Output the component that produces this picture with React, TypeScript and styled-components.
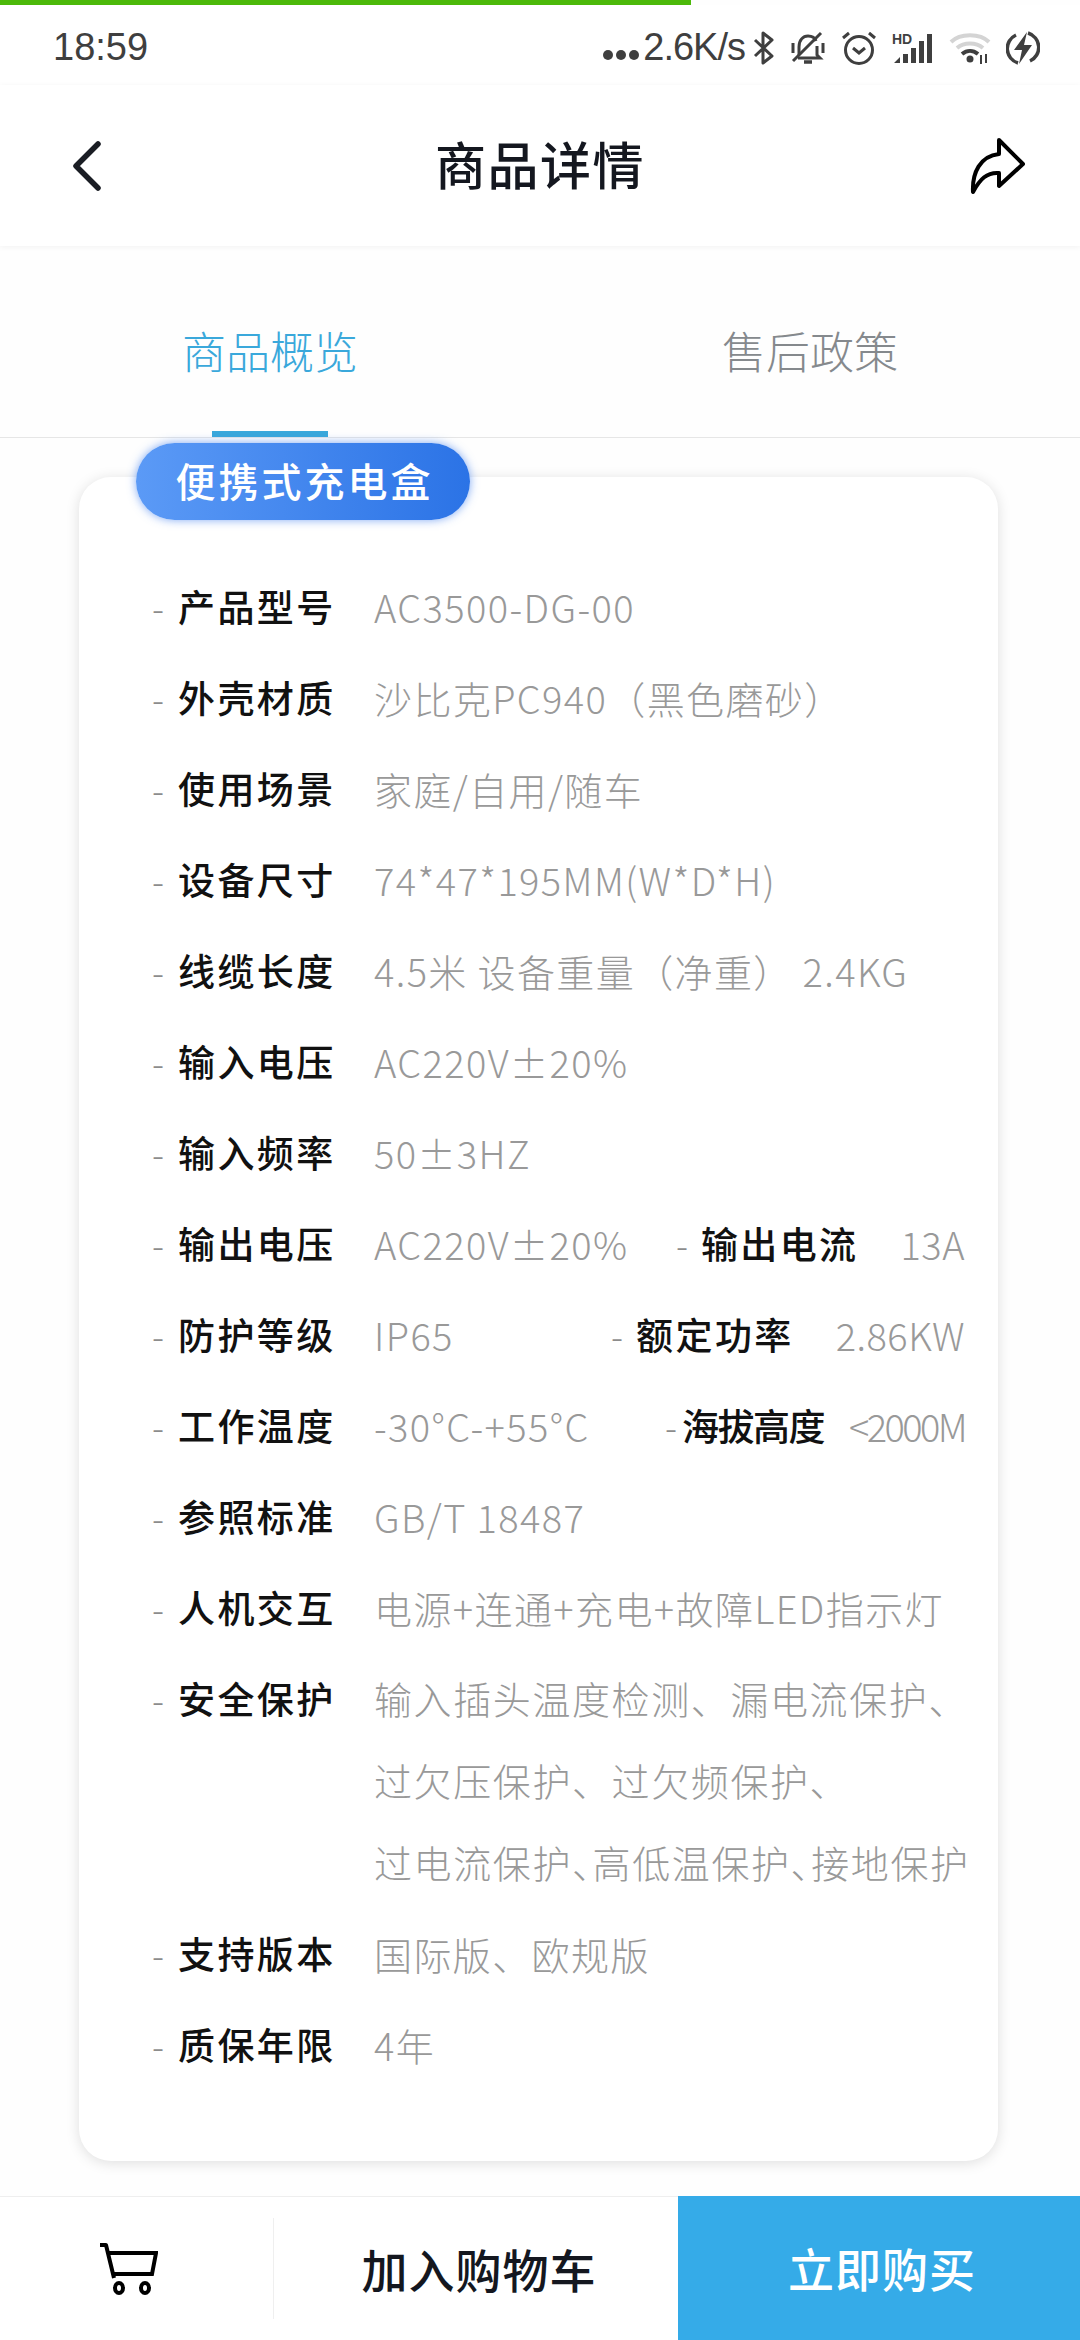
import React from 'react';
import styled, { createGlobalStyle } from 'styled-components';

const GlobalStyle = createGlobalStyle`
    html, body {
        margin: 0;
        padding: 0;
        background: #fff;
    }
    body {
        font-family: "Noto Sans CJK SC", "Noto Sans", sans-serif;
    }
`;

const Page = styled.div`
    width: 1080px;
    height: 2340px;
    display: flex;
    flex-direction: column;
    background: #fefefe;
    overflow: hidden;
`;

const Progress = styled.div`
    width: 691px;
    height: 5px;
    flex: none;
    background: #4cb90a;
`;

const StatusBar = styled.div`
    height: 85px;
    flex: none;
    display: flex;
    align-items: center;
    justify-content: space-between;
    padding: 0 40px 0 53px;
    background: #fff;
    color: #3f3f3f;
    font-family: "Liberation Sans", Arial, sans-serif;
    font-size: 38px;
    box-sizing: border-box;
    margin-bottom: -5px;
`;

const StatusRight = styled.div`
    display: flex;
    align-items: center;
    gap: 15px;
`;

const Speed = styled.span`
    display: flex;
    align-items: center;
    gap: 4px;
    margin-right: -7px;
    letter-spacing: -1px;
`;

const Dots = styled.svg`
    width: 36px;
    height: 12px;
    margin-top: 14px;
`;

const Header = styled.header`
    height: 161px;
    flex: none;
    display: grid;
    grid-template-columns: 1fr auto 1fr;
    align-items: center;
    padding: 0 54px;
    background: #fff;
    box-sizing: border-box;
    box-shadow: 0 1px 6px rgba(0, 0, 0, 0.05);
    position: relative;
    svg:first-child {
        margin-left: 17px;
    }
    svg:last-child {
        justify-self: end;
    }
`;

const Title = styled.h1`
    margin: 0;
    padding-bottom: 6px;
    font-size: 51px;
    font-weight: 500;
    color: #14171f;
    letter-spacing: 1.5px;
`;

const Tabs = styled.nav`
    height: 191px;
    flex: none;
    display: flex;
    border-bottom: 1px solid #e6e6e6;
    box-sizing: content-box;
`;

const Tab = styled.div<{ $active?: boolean }>`
    flex: 1;
    display: flex;
    align-items: center;
    justify-content: center;
    padding-top: 16px;
    position: relative;
    font-size: 44px;
    font-weight: 300;
    color: ${({ $active }) => ($active ? '#3aa8db' : '#85898d')};
    ${({ $active }) =>
        $active &&
        `
        &::after {
            content: '';
            position: absolute;
            left: 212px;
            bottom: 0;
            width: 116px;
            height: 6px;
            background: #3aa8db;
        }
    `}
`;

const Content = styled.main`
    flex: 1;
    padding: 39px 82px 0 79px;
`;

const Card = styled.section`
    position: relative;
    height: 1684px;
    box-sizing: border-box;
    padding: 84px 33px 0 73px;
    background: #fff;
    border-radius: 32px;
    box-shadow: 0 2px 14px rgba(0, 0, 0, 0.13);
`;

const Badge = styled.div`
    position: absolute;
    top: -34px;
    left: 57px;
    width: 334px;
    height: 77px;
    padding: 0 0 3px 3px;
    box-sizing: border-box;
    display: flex;
    align-items: center;
    justify-content: center;
    border-radius: 39px;
    background: linear-gradient(90deg, #5b9af6, #2b73e6);
    box-shadow: 0 0 10px rgba(72, 132, 240, 0.7);
    color: #fff;
    font-size: 40px;
    font-weight: 500;
    letter-spacing: 3px;
`;

const Row = styled.div<{ $multi?: boolean }>`
    display: flex;
    align-items: flex-start;
    min-height: 91px;
    line-height: 91px;
    font-size: 38px;
    ${({ $multi }) => $multi && 'margin-bottom: 5px;'}
`;

const Dash = styled.span`
    width: 26px;
    flex: none;
    color: #8c8c8c;
    font-size: 36px;
    font-weight: 300;
`;

const Label = styled.span`
    flex: none;
    width: 196px;
    color: #111;
    font-size: 37px;
    font-weight: 500;
    letter-spacing: 2.4px;
`;

const Value = styled.span`
    color: #999;
    font-weight: 300;
    letter-spacing: 1.4px;
    white-space: nowrap;
`;

const ValueLines = styled.div`
    display: flex;
    flex-direction: column;
    color: #999;
    font-weight: 300;
    line-height: 82px;
    white-space: nowrap;
    padding-top: 4px;
`;

const ValueLine = styled.span<{ $halfPunct?: boolean }>`
    letter-spacing: 1.6px;
    ${({ $halfPunct }) => $halfPunct && 'font-feature-settings: "halt";'}
`;

const Pair = styled.div<{ $gap: number; $tight?: boolean }>`
    margin-left: auto;
    display: flex;
    ${Dash} {
        width: ${({ $tight }) => ($tight ? '17px' : '25px')};
    }
    ${Label} {
        width: auto;
        margin-right: ${({ $gap }) => $gap}px;
        letter-spacing: ${({ $tight }) => ($tight ? '-1.5px' : '2.4px')};
    }
    ${Value} {
        letter-spacing: ${({ $tight }) => ($tight ? '-2.6px' : '0.5px')};
    }
`;

const BottomBar = styled.footer`
    height: 144px;
    flex: none;
    display: flex;
    background: #fff;
    border-top: 1px solid #eee;
    box-sizing: border-box;
`;

const CartCell = styled.div`
    width: 274px;
    flex: none;
    display: flex;
    align-items: center;
    justify-content: center;
    padding-right: 16px;
    box-sizing: border-box;
    position: relative;
    &::after {
        content: '';
        position: absolute;
        right: 0;
        top: 21px;
        bottom: 21px;
        width: 1px;
        background: #efefef;
    }
`;

const Action = styled.button<{ $primary?: boolean }>`
    flex: 1;
    border: 0;
    padding: 0 0 2px 6px;
    margin: ${({ $primary }) => ($primary ? '-1px 0 0' : '0')};
    font-family: inherit;
    font-size: 46px;
    font-weight: 500;
    letter-spacing: 1px;
    color: ${({ $primary }) => ($primary ? '#fff' : '#14171f')};
    background: ${({ $primary }) => ($primary ? '#35abe8' : '#fff')};
`;

const AddButton = styled(Action)`
    flex: none;
    width: 404px;
`;

const BackIcon = () => (
    <svg width="32" height="50" viewBox="0 0 32 50" fill="none">
        <path d="M27 3 5 25l22 22" stroke="#1a1d24" strokeWidth="5.5" strokeLinecap="round" strokeLinejoin="round" />
    </svg>
);

const ShareIcon = () => (
    <svg width="58" height="58" viewBox="0 0 58 58" fill="none">
        <path
            d="M31 3 55 27 31 49V36C19 35 12 42 5 55 4 36 12 19 31 17Z"
            stroke="#000"
            strokeWidth="4"
            strokeLinejoin="round"
        />
    </svg>
);

const CartIcon = () => (
    <svg width="58" height="54" viewBox="0 0 58 54" fill="none" stroke="#000" strokeWidth="4">
        <path d="M0 3h6l8 33" strokeLinejoin="round" />
        <path d="M8 11h48l-4 21H13" />
        <ellipse cx="19" cy="46" rx="4" ry="5" />
        <ellipse cx="45" cy="46" rx="4" ry="5" />
    </svg>
);

const StatusIcons = () => (
    <>
        <svg width="22" height="34" viewBox="0 0 22 34" fill="none" stroke="#3f3f3f" strokeWidth="3">
            <path d="M2 9 19 25 10 32V2l9 7L2 25" strokeLinejoin="round" />
        </svg>
        <svg width="36" height="34" viewBox="0 0 36 34" fill="none" stroke="#3f3f3f" strokeWidth="3">
            <path d="M9 24V16C9 9 13 5 18 5c4 0 7 2 8 5M27 15v9l3 3H8" />
            <path d="M3 30 31 2" />
            <path d="M14 31h8" strokeWidth="3.5" />
            <path d="M3 12v10M33 12v10" />
        </svg>
        <svg width="36" height="34" viewBox="0 0 36 34" fill="none" stroke="#3f3f3f" strokeWidth="3">
            <circle cx="18" cy="19" r="13.5" />
            <path d="M12 17l6 5 6-5M2 7l6-5M34 7l-6-5" />
        </svg>
        <svg width="42" height="32" viewBox="0 0 42 32">
            <text x="0" y="12" fontFamily="Liberation Sans" fontWeight="700" fontSize="14" fill="#3f3f3f">
                HD
            </text>
            <path
                d="M2 31 8 25v6ZM11 22h5v9h-5ZM19 16h5v15h-5ZM27 9h5v22h-5ZM35 2h5v29h-5Z"
                fill="#3f3f3f"
            />
        </svg>
        <svg width="42" height="34" viewBox="0 0 42 34" fill="none">
            <path d="M2 11C11 2 31 2 40 11M8 17c7-6 19-6 26 0" stroke="#d4d4d4" strokeWidth="4" />
            <path d="M13 23c5-4 11-4 16 0" stroke="#3f3f3f" strokeWidth="4" />
            <circle cx="21" cy="28" r="3.5" fill="#3f3f3f" />
            <path d="M32 24v9M37 23v9" stroke="#3f3f3f" strokeWidth="2" />
        </svg>
        <svg width="34" height="34" viewBox="0 0 34 34" fill="none">
            <path d="M10 4a15 15 0 0 0 2 28M24 30a15 15 0 0 0-2-28" stroke="#3f3f3f" strokeWidth="3.5" />
            <path d="M21 1 8 19h8l-3 14 13-19h-8Z" fill="#3f3f3f" />
        </svg>
    </>
);

type Spec = {
    label: string;
    value?: string;
    lines?: { text: string; halfPunct?: boolean }[];
    extra?: { label: string; value: string; gap: number; tight?: boolean };
};

const specs: Spec[] = [
    { label: '产品型号', value: 'AC3500-DG-00' },
    { label: '外壳材质', value: '沙比克PC940（黑色磨砂）' },
    { label: '使用场景', value: '家庭/自用/随车' },
    { label: '设备尺寸', value: '74*47*195MM(W*D*H)' },
    { label: '线缆长度', value: '4.5米 设备重量（净重） 2.4KG' },
    { label: '输入电压', value: 'AC220V±20%' },
    { label: '输入频率', value: '50±3HZ' },
    { label: '输出电压', value: 'AC220V±20%', extra: { label: '输出电流', value: '13A', gap: 42 } },
    { label: '防护等级', value: 'IP65', extra: { label: '额定功率', value: '2.86KW', gap: 42 } },
    { label: '工作温度', value: '-30°C-+55°C', extra: { label: '海拔高度', value: '<2000M', gap: 25, tight: true } },
    { label: '参照标准', value: 'GB/T 18487' },
    { label: '人机交互', value: '电源+连通+充电+故障LED指示灯' },
    {
        label: '安全保护',
        lines: [
            { text: '输入插头温度检测、漏电流保护、' },
            { text: '过欠压保护、过欠频保护、' },
            { text: '过电流保护、高低温保护、接地保护', halfPunct: true },
        ],
    },
    { label: '支持版本', value: '国际版、欧规版' },
    { label: '质保年限', value: '4年' },
];

export default function App() {
    return (
        <Page>
            <GlobalStyle />
            <Progress />
            <StatusBar>
                <span>18:59</span>
                <StatusRight>
                    <Speed>
                        <Dots viewBox="0 0 36 12" fill="#3f3f3f">
                            <circle cx="5" cy="6" r="5" />
                            <circle cx="18" cy="6" r="5" />
                            <circle cx="31" cy="6" r="5" />
                        </Dots>
                        2.6K/s
                    </Speed>
                    <StatusIcons />
                </StatusRight>
            </StatusBar>
            <Header>
                <BackIcon />
                <Title>商品详情</Title>
                <ShareIcon />
            </Header>
            <Tabs>
                <Tab $active>商品概览</Tab>
                <Tab>售后政策</Tab>
            </Tabs>
            <Content>
                <Card>
                    <Badge>便携式充电盒</Badge>
                    {specs.map((spec) => (
                        <Row key={spec.label} $multi={!!spec.lines}>
                            <Dash>-</Dash>
                            <Label>{spec.label}</Label>
                            {spec.lines ? (
                                <ValueLines>
                                    {spec.lines.map((line) => (
                                        <ValueLine key={line.text} $halfPunct={line.halfPunct}>
                                            {line.text}
                                        </ValueLine>
                                    ))}
                                </ValueLines>
                            ) : (
                                <Value>{spec.value}</Value>
                            )}
                            {spec.extra && (
                                <Pair $gap={spec.extra.gap} $tight={spec.extra.tight}>
                                    <Dash>-</Dash>
                                    <Label>{spec.extra.label}</Label>
                                    <Value>{spec.extra.value}</Value>
                                </Pair>
                            )}
                        </Row>
                    ))}
                </Card>
            </Content>
            <BottomBar>
                <CartCell>
                    <CartIcon />
                </CartCell>
                <AddButton>加入购物车</AddButton>
                <Action $primary>立即购买</Action>
            </BottomBar>
        </Page>
    );
}
